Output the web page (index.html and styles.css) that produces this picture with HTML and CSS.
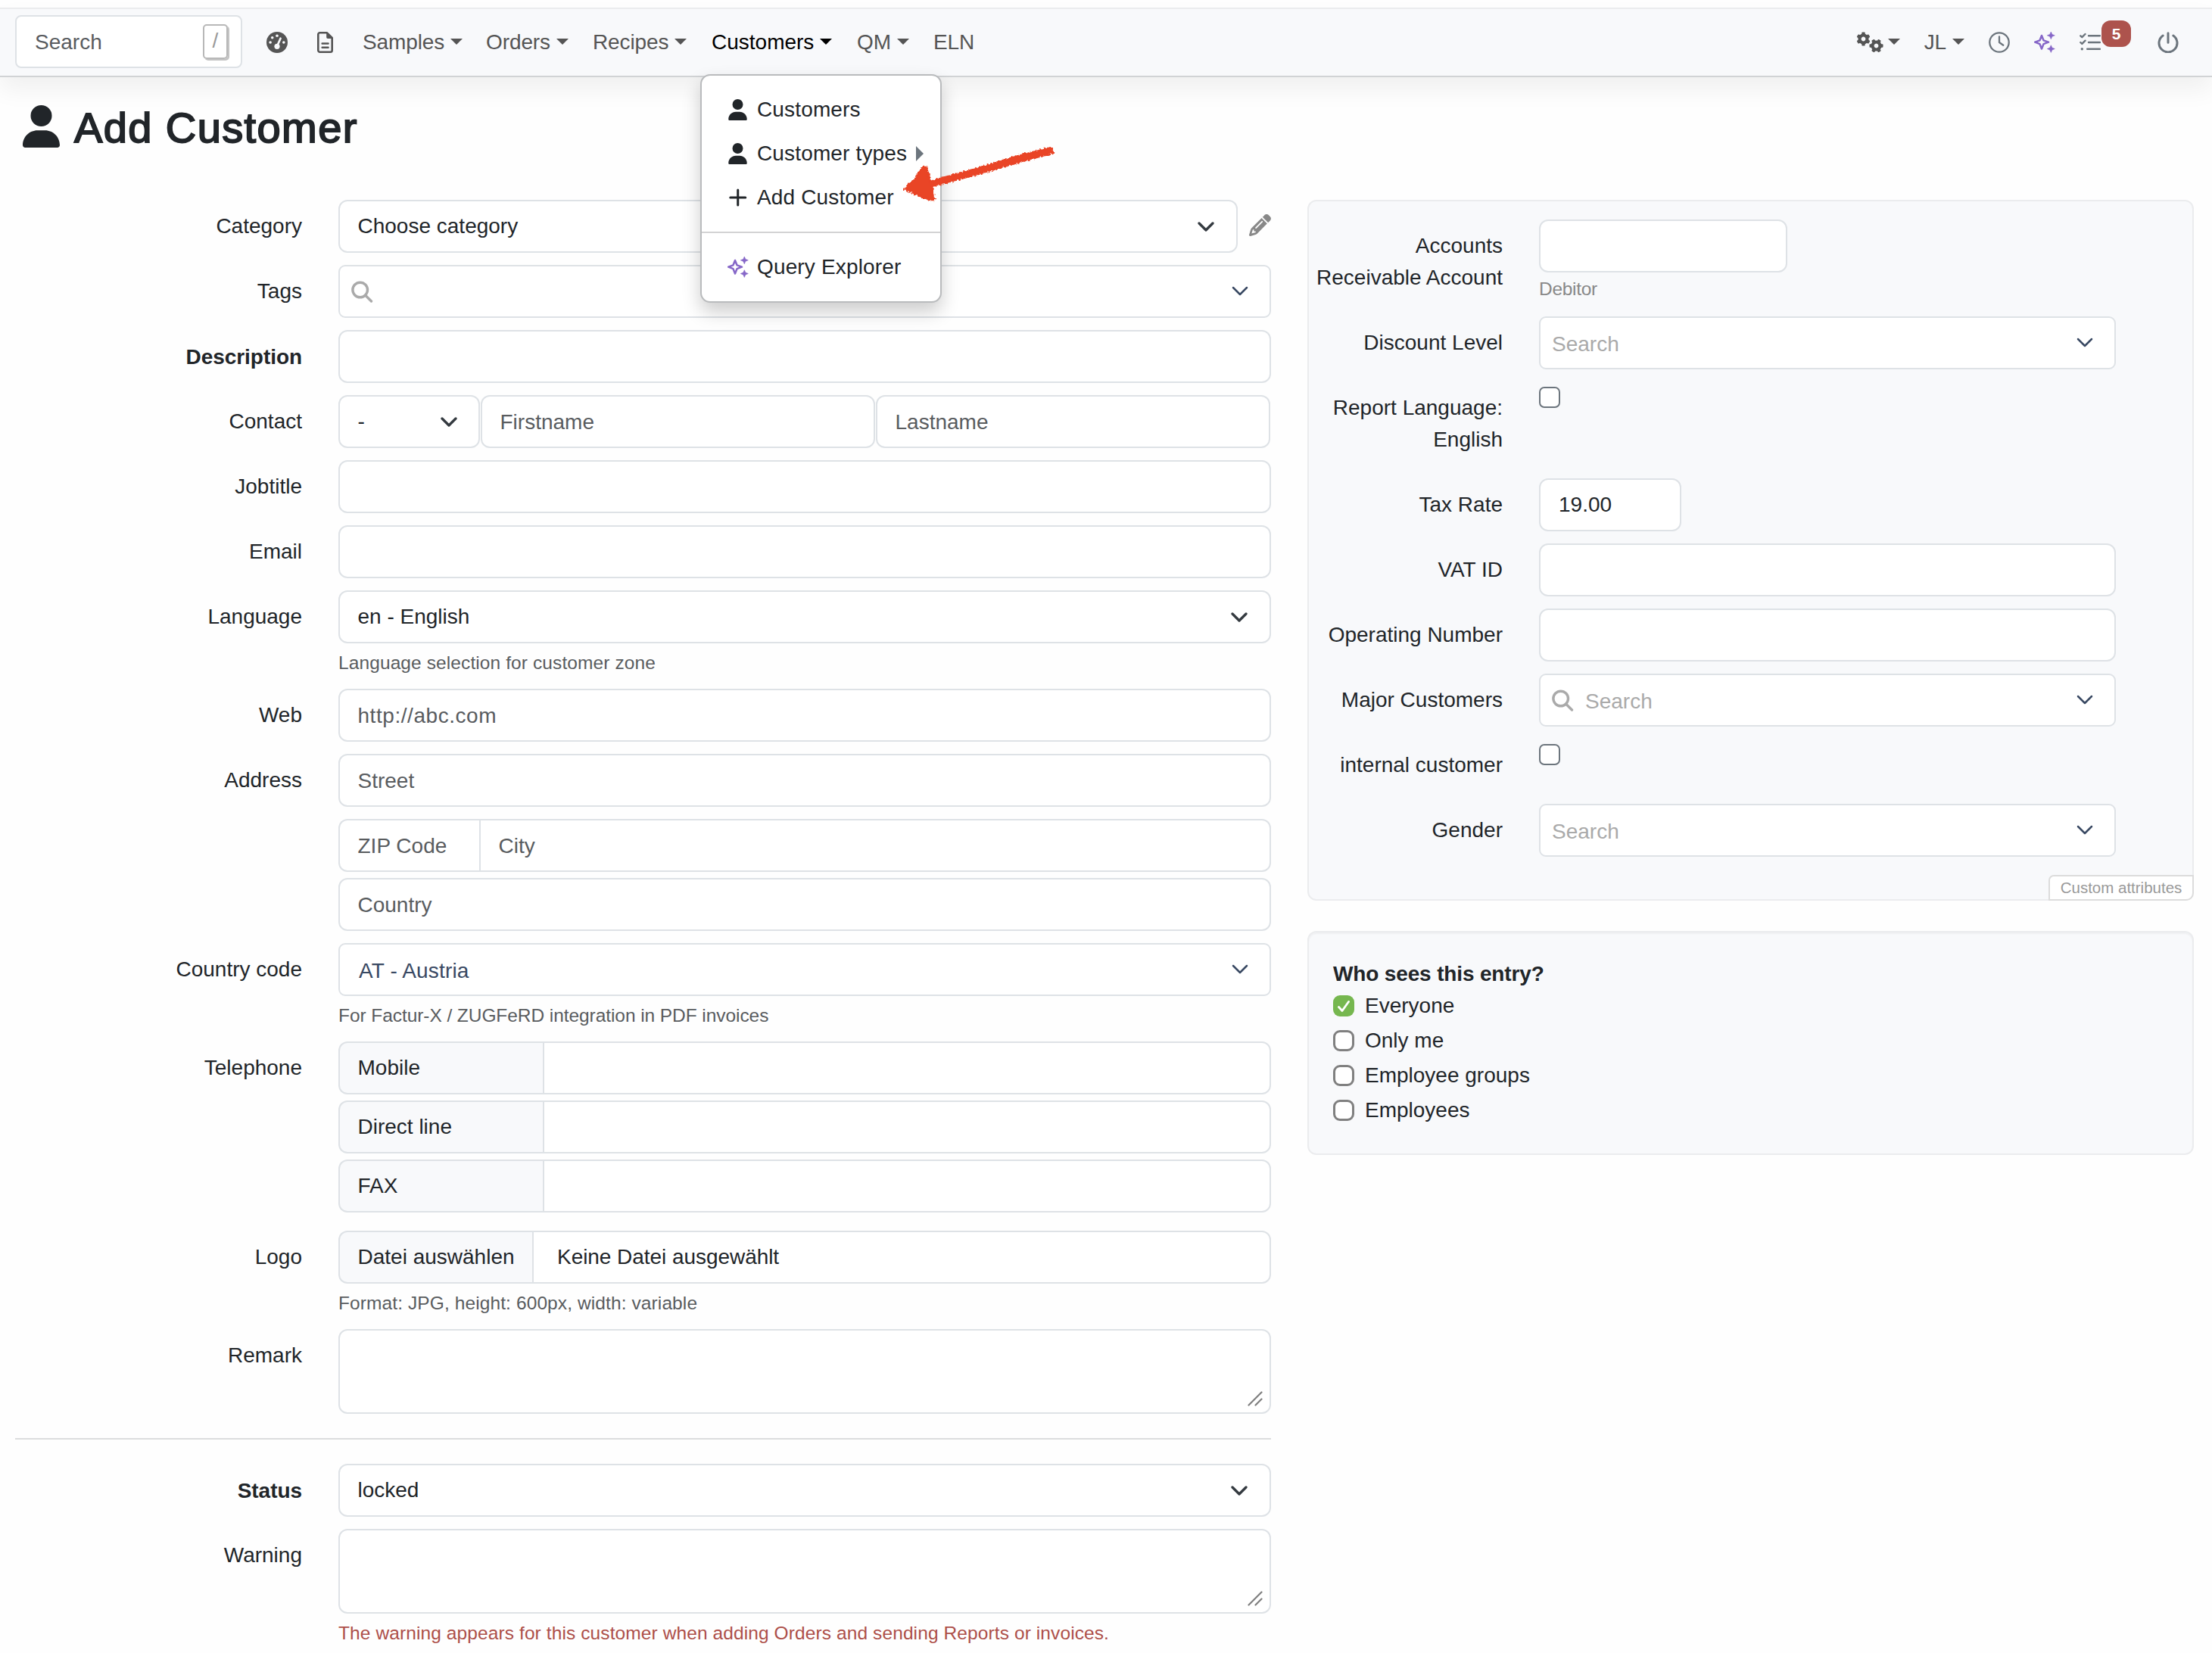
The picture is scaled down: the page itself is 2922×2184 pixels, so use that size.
FILE: index.html
```html
<!DOCTYPE html>
<html lang="en">
<head>
<meta charset="utf-8">
<title>Add Customer</title>
<link rel="stylesheet" href="styles.css">
</head>
<body>
<svg class="sprite" aria-hidden="true">
  <filter id="rough" x="-5%" y="-10%" width="110%" height="120%"><feTurbulence type="fractalNoise" baseFrequency=".35" numOctaves="2" seed="4"/><feDisplacementMap in="SourceGraphic" scale="5" xChannelSelector="R" yChannelSelector="G"/></filter>
  <symbol id="user" viewBox="0 0 448 512"><path fill="currentColor" d="M224 256a128 128 0 1 0 0-256 128 128 0 1 0 0 256zm-45.7 48C79.800 304 0 383.800 0 482.300 0 498.700 13.300 512 29.700 512h388.600c16.400 0 29.700-13.300 29.700-29.700C448 383.800 368.200 304 269.700 304h-91.400z"/></symbol>
  <symbol id="sparkles" viewBox="0 0 28 28"><path fill="none" stroke="currentColor" stroke-width="2.500" stroke-linejoin="round" d="M10 5l2.500 6.300 6.500 2.400-6.500 2.500L10 22.500l-2.500-6.300L1.200 13.700l6.300-2.400z"/><path fill="currentColor" stroke="currentColor" stroke-width=".6" stroke-linejoin="round" d="M22.300 0l1.500 3.400 3.500 1.400-3.500 1.500-1.500 3.400-1.500-3.400-3.500-1.500 3.500-1.400zM22.300 17.700l1.500 3.400 3.500 1.400-3.500 1.500-1.500 3.400-1.500-3.400-3.500-1.500 3.500-1.400z"/></symbol>
  <symbol id="chevron" viewBox="0 0 22 13"><path fill="none" stroke="currentColor" stroke-width="3.300" stroke-linecap="round" stroke-linejoin="round" d="M2 2l9 9 9-9"/></symbol>
  <symbol id="chevron-thin" viewBox="0 0 22 13"><path fill="none" stroke="currentColor" stroke-width="2.500" stroke-linecap="round" stroke-linejoin="round" d="M2 2l9 9 9-9"/></symbol>
  <symbol id="magnifier" viewBox="0 0 29 29"><path fill="none" stroke="currentColor" stroke-width="3.400" stroke-linecap="round" d="M18.500 19l8 8"/><circle cx="11.700" cy="12" r="9.800" fill="none" stroke="currentColor" stroke-width="3.400"/></symbol>
  <symbol id="grip" viewBox="0 0 20 20"><path stroke="currentColor" stroke-width="2.200" stroke-linecap="round" d="M1.500 18.500l17-17M10.500 18.500l8-8"/></symbol>
  <symbol id="gear" viewBox="-9.500 -9.500 19 19"><circle r="5" fill="none" stroke="currentColor" stroke-width="4.200"/><g fill="currentColor"><rect x="-2.200" y="-9" width="4.400" height="4" rx="1"/><rect x="-2.200" y="-9" width="4.400" height="4" rx="1" transform="rotate(60)"/><rect x="-2.200" y="-9" width="4.400" height="4" rx="1" transform="rotate(120)"/><rect x="-2.200" y="-9" width="4.400" height="4" rx="1" transform="rotate(180)"/><rect x="-2.200" y="-9" width="4.400" height="4" rx="1" transform="rotate(240)"/><rect x="-2.200" y="-9" width="4.400" height="4" rx="1" transform="rotate(300)"/></g></symbol>
</svg>

<nav class="navbar">
  <div class="quick-search"><span>Search</span><kbd>/</kbd></div>
  <div class="nav-main">
    <svg class="icon" viewBox="0 0 28 28" width="28" height="28"><circle cx="14" cy="14" r="14" fill="currentColor"/><g fill="#f8f9fb"><circle cx="5.100" cy="14" r="1.800"/><circle cx="7.700" cy="7.800" r="1.800"/><circle cx="14" cy="5.200" r="1.800"/><circle cx="22.800" cy="14" r="1.800"/><circle cx="14" cy="19.300" r="3.600"/></g><path stroke="#f8f9fb" stroke-width="2.600" stroke-linecap="round" d="M18.600 8.600l-4 9"/></svg>
    <svg class="icon" viewBox="0 0 21 28" width="21" height="28"><path fill="none" stroke="currentColor" stroke-width="2.600" stroke-linejoin="round" d="M3.500 1.300h9.500l6.700 6.700v16.500a2.200 2.200 0 0 1-2.200 2.200h-14a2.200 2.200 0 0 1-2.200-2.200v-21a2.200 2.200 0 0 1 2.200-2.200z"/><path fill="currentColor" d="M12.200 1v6.300a1.700 1.700 0 0 0 1.700 1.700H20z"/><path stroke="currentColor" stroke-width="2.400" stroke-linecap="round" d="M6.600 15.500h8M6.600 20.700h8"/></svg>
    <a class="nav-link">Samples<i class="caret"></i></a>
    <a class="nav-link">Orders<i class="caret"></i></a>
    <a class="nav-link">Recipes<i class="caret"></i></a>
    <div class="nav-drop">
      <a class="nav-link active">Customers<i class="caret"></i></a>
      <div class="dropdown">
        <a class="item"><svg class="ic"><use href="#user"/></svg>Customers</a>
        <a class="item"><svg class="ic"><use href="#user"/></svg>Customer types<i class="caret-right"></i></a>
        <a class="item"><svg class="ic" viewBox="0 0 24.500 28"><path stroke="currentColor" stroke-width="3" stroke-linecap="round" d="M2.500 14h20M12.500 4v20"/></svg>Add Customer</a>
        <div class="divider"></div>
        <a class="item"><svg class="ic ic-wide"><use href="#sparkles"/></svg>Query Explorer</a>
        <svg class="pointer" viewBox="0 0 204 84" width="204" height="84"><path filter="url(#rough)" fill="#e94427" stroke="#e94427" stroke-width="2.500" stroke-linejoin="round" d="M5 63l11-11 8-11 6-8 3 0 3 9 3 11 20-6 44-12 45-14 50-13 3 7-48 13-48 14-44 12-20 5 2 10 1 8-5 0-16-6z"/></svg>
      </div>
    </div>
    <a class="nav-link">QM<i class="caret"></i></a>
    <a class="nav-link">ELN</a>
  </div>
  <div class="nav-side">
    <a class="nav-link"><span class="gears"><svg width="19" height="19"><use href="#gear"/></svg><svg class="gear-b" width="19" height="19"><use href="#gear"/></svg></span><i class="caret"></i></a>
    <a class="nav-link">JL<i class="caret"></i></a>
    <svg class="muted" viewBox="0 0 28 28" width="28" height="28"><g fill="none" stroke="currentColor" stroke-width="2.300" stroke-linecap="round" stroke-linejoin="round"><circle cx="14" cy="14" r="12.700"/><path d="M14 6.500v7.500l5.300 3.700"/></g></svg>
    <svg class="violet" width="28" height="28"><use href="#sparkles"/></svg>
    <svg class="muted" viewBox="0 0 28 28" width="28" height="28"><g fill="none" stroke="currentColor" stroke-width="2.400" stroke-linecap="round" stroke-linejoin="round"><path d="M12 5.300h15M12 14h15M10.200 22.700h16.800M1.300 5.300l2 1.900 4.200-4.200M1.300 14l2 1.900 4.200-4.200"/></g><circle cx="3.300" cy="22.700" r="1.700" fill="currentColor"/></svg>
    <span class="count">5</span>
    <svg class="muted" viewBox="0 0 28 28" width="28" height="28"><g fill="none" stroke="currentColor" stroke-width="3" stroke-linecap="round"><path d="M14 1.800v12.500M7.200 5a12 12 0 1 0 13.600 0"/></g></svg>
  </div>
</nav>

<main>
  <h1><svg width="49" height="56"><use href="#user"/></svg>Add Customer</h1>
  <div class="columns">
    <form class="form">
      <div class="row"><label>Category</label><div class="field inline"><div class="control">Choose category<svg class="chev"><use href="#chevron"/></svg></div><svg class="pencil" viewBox="0 0 512 512"><path fill="currentColor" d="M410.300 231l11.300-11.300-33.900-33.900-62.100-62.100L291.700 89.800l-11.300 11.300-22.600 22.600L58.600 322.900c-10.400 10.400-18 23.300-22.200 37.400L1 480.700c-2.500 8.400-.2 17.500 6.100 23.700s15.300 8.500 23.700 6.100l120.300-35.400c14.100-4.200 27-11.800 37.400-22.200L387.700 253.700 410.300 231zM160 399.400l-9.100 22.700c-4 3.100-8.500 5.400-13.300 6.900L59.400 452l23-78.100c1.400-4.900 3.800-9.400 6.900-13.300l22.700-9.100v32c0 8.800 7.200 16 16 16h32zM362.700 18.700L348.300 33.200 325.700 55.800 314.300 67.100l33.900 33.900 62.100 62.100 33.900 33.900 11.300-11.300 22.600-22.600 14.500-14.500c25-25 25-65.500 0-90.500L453.300 18.700c-25-25-65.500-25-90.500 0zm-47.400 168l-144 144c-6.200 6.200-16.400 6.200-22.600 0s-6.200-16.400 0-22.600l144-144c6.200-6.200 16.400-6.200 22.600 0s6.200 16.400 0 22.600z"/></svg></div></div>
      <div class="row"><label>Tags</label><div class="field"><div class="control picker"><svg class="lens"><use href="#magnifier"/></svg><svg class="chev"><use href="#chevron-thin"/></svg></div></div></div>
      <div class="row"><label class="required">Description</label><div class="field"><div class="control"></div></div></div>
      <div class="row"><label>Contact</label><div class="field contact"><div class="control title">-<svg class="chev"><use href="#chevron"/></svg></div><div class="control hint">Firstname</div><div class="control hint">Lastname</div></div></div>
      <div class="row"><label>Jobtitle</label><div class="field"><div class="control"></div></div></div>
      <div class="row"><label>Email</label><div class="field"><div class="control"></div></div></div>
      <div class="row"><label>Language</label><div class="field"><div class="control">en - English<svg class="chev"><use href="#chevron"/></svg></div><p class="help">Language selection for customer zone</p></div></div>
      <div class="row"><label>Web</label><div class="field"><div class="control hint url">http://abc.com</div></div></div>
      <div class="row"><label>Address</label><div class="field stack"><div class="control hint street">Street</div><div class="group"><div class="control hint zip">ZIP Code</div><div class="control hint">City</div></div><div class="control hint">Country</div></div></div>
      <div class="row"><label>Country code</label><div class="field"><div class="control picker value">AT - Austria<svg class="chev"><use href="#chevron-thin"/></svg></div><p class="help snug">For Factur-X / ZUGFeRD integration in PDF invoices</p></div></div>
      <div class="row phones"><label>Telephone</label><div class="field stack"><div class="group"><div class="control addon">Mobile</div><div class="control"></div></div><div class="group"><div class="control addon">Direct line</div><div class="control"></div></div><div class="group"><div class="control addon">FAX</div><div class="control"></div></div></div></div>
      <div class="row"><label>Logo</label><div class="field"><div class="group"><div class="control addon file">Datei auswählen</div><div class="control filename">Keine Datei ausgewählt</div></div><p class="help">Format: JPG, height: 600px, width: variable</p></div></div>
      <div class="row"><label>Remark</label><div class="field"><div class="control area"><svg class="grip"><use href="#grip"/></svg></div></div></div>
      <hr>
      <div class="row"><label class="required">Status</label><div class="field"><div class="control">locked<svg class="chev"><use href="#chevron"/></svg></div></div></div>
      <div class="row"><label>Warning</label><div class="field"><div class="control area"><svg class="grip"><use href="#grip"/></svg></div><p class="help danger">The warning appears for this customer when adding Orders and sending Reports or invoices.</p></div></div>
    </form>

    <aside>
      <section class="card attributes">
        <div class="row tall"><label>Accounts Receivable Account</label><div class="field"><div class="control account"></div><p class="help light">Debitor</p></div></div>
        <div class="row"><label>Discount Level</label><div class="field"><div class="control picker ghost">Search<svg class="chev"><use href="#chevron-thin"/></svg></div></div></div>
        <div class="row tall"><label>Report Language: English</label><div class="field"><span class="box"></span></div></div>
        <div class="row"><label>Tax Rate</label><div class="field"><div class="control rate">19.00</div></div></div>
        <div class="row"><label>VAT ID</label><div class="field"><div class="control"></div></div></div>
        <div class="row"><label>Operating Number</label><div class="field"><div class="control"></div></div></div>
        <div class="row"><label>Major Customers</label><div class="field"><div class="control picker ghost"><svg class="lens"><use href="#magnifier"/></svg>Search<svg class="chev"><use href="#chevron-thin"/></svg></div></div></div>
        <div class="row"><label>internal customer</label><div class="field"><span class="box"></span></div></div>
        <div class="row"><label>Gender</label><div class="field"><div class="control picker ghost">Search<svg class="chev"><use href="#chevron-thin"/></svg></div></div></div>
        <span class="tag">Custom attributes</span>
      </section>
      <section class="card visibility">
        <h2>Who sees this entry?</h2>
        <div class="option"><span class="check on"><svg viewBox="0 0 28 28" width="28" height="28"><path fill="none" stroke="#fff" stroke-width="2.800" stroke-linecap="round" stroke-linejoin="round" d="M7.500 15.500l4.500 5L20.500 8.500"/></svg></span>Everyone</div>
        <div class="option"><span class="check"></span>Only me</div>
        <div class="option"><span class="check"></span>Employee groups</div>
        <div class="option"><span class="check"></span>Employees</div>
      </section>
    </aside>
  </div>
</main>
</body>
</html>
```
FILE: styles.css
```css
* { box-sizing: border-box; }

body {
  margin: 0;
  padding-top: 10px;
  height: 2184px;
  overflow: hidden;
  background: #fefefe;
  color: #212529;
  font: 28px/42px "Liberation Sans", Arial, sans-serif;
}

svg { display: block; flex: none; }
.sprite { position: absolute; width: 0; height: 0; }
p, h1, h2 { margin: 0; }

/* Navigation */
.navbar {
  position: relative;
  z-index: 2;
  display: flex;
  align-items: center;
  height: 92px;
  padding: 0 44px 0 20px;
  background: #f8f9fb;
  border-top: 2px solid #ebecee;
  border-bottom: 2px solid #d1d3d5;
  box-shadow: 0 16px 32px rgba(0, 0, 0, .06);
}

.quick-search {
  display: flex;
  justify-content: space-between;
  align-items: center;
  width: 300px;
  height: 70px;
  padding: 0 17px 0 24px;
  margin-top: -2px;
  background: #fff;
  border: 2px solid #dee2e6;
  border-radius: 8px;
  color: #595c5f;
}

.quick-search span { padding-top: 1px; }

kbd {
  width: 33px;
  height: 46px;
  border: 2px solid #b8b8b8;
  border-radius: 5px;
  box-shadow: 2px 2px 0 #c4c4c4;
  font: 28px/40px "Liberation Sans", Arial, sans-serif;
  text-align: center;
  color: #999;
}

.nav-main {
  display: grid;
  grid-template-columns: 67px 60px 163px 141px 157px 192px 101px auto;
  align-items: center;
  margin-left: 32px;
  color: #555;
}

.nav-link { display: flex; align-items: center; gap: 8px; color: #555; letter-spacing: -.1px; }
.nav-link.active { color: #000; letter-spacing: 0; }

.caret {
  border: 8px solid transparent;
  border-top-color: currentColor;
  border-bottom: 0;
  margin-top: -2px;
}

.nav-drop { position: relative; }

.dropdown {
  position: absolute;
  left: -15px;
  top: 63px;
  width: 319px;
  padding: 16px 0;
  background: #fff;
  background-clip: padding-box;
  border: 2px solid #b9bbbd;
  border-radius: 13px;
  box-shadow: 0 12px 24px rgba(0, 0, 0, .2);
  color: #212529;
  letter-spacing: .15px;
}

.item {
  display: flex;
  align-items: center;
  height: 58px;
  padding-left: 35px;
  white-space: nowrap;
}
.ic { width: 25px; height: 28px; margin-right: 13px; }
.ic-wide { width: 28px; margin: 0 11px 0 -1px; color: #8667c8; }

.caret-right {
  margin-left: 12px;
  border: 10px solid transparent;
  border-left-color: #6c757d;
  border-right: 0;
}

.divider { height: 2px; margin: 16px 0; background: #d3d3d4; }
.pointer { position: absolute; left: 263px; top: 87px; }

.nav-side { display: flex; align-items: center; margin-left: auto; color: #555; }
.gears { display: flex; width: 34px; height: 28px; }
.gear-b { align-self: flex-end; margin-left: -2px; transform: rotate(30deg); }
.nav-side .nav-link { margin-right: 32px; }
.muted { color: #6c757d; }
.violet { color: #8667c8; margin: 0 32px; }

.count {
  width: 39px;
  height: 35px;
  margin: -23px 35px 0 1px;
  border-radius: 12px;
  background: #ad534d;
  color: #fff;
  font-size: 21px;
  font-weight: bold;
  line-height: 36px;
  text-align: center;
}

/* Page layout */
main { padding: 33px 24px 0 20px; }

h1 {
  display: flex;
  gap: 19px;
  height: 67px;
  margin-bottom: 62px;
  padding-left: 10px;
  font-size: 56px;
  font-weight: normal;
  line-height: 67px;
  letter-spacing: 1.4px;
  -webkit-text-stroke: 1.9px #212529;
}
h1 svg { margin-top: 4px; }

.columns {
  display: grid;
  grid-template-columns: 1659px 1fr;
  gap: 48px;
  align-items: start;
}

.row {
  display: grid;
  grid-template-columns: 427px 1fr;
  margin-bottom: 16px;
  min-height: 70px;
}
label { padding: 14px 48px 0 0; text-align: right; }
.required { font-weight: bold; padding-top: 15px; letter-spacing: -.05px; }

.control {
  position: relative;
  height: 70px;
  padding: 12px 24px;
  background: #fff;
  border: 2px solid #dee2e6;
  border-radius: 12px;
  white-space: nowrap;
}
.hint { padding-top: 13px; color: #595c5f; }
.url { letter-spacing: .55px; }
.form .control { padding-left: 23.5px; }
.inline { display: flex; align-items: center; gap: 15px; }
.inline .control { flex: 1; }
.pencil { width: 29px; height: 29px; margin-top: -4px; color: #888; }

.chev {
  position: absolute;
  right: 29px;
  top: 27px;
  width: 22px;
  height: 13px;
  color: #343a40;
}
.title .chev { right: 28px; }
.picker { border-radius: 9px; padding-top: 14px; }
.picker .chev { right: 28px; top: 26px; color: #394963; }
.picker .lens { position: absolute; left: 15px; top: 19px; width: 29px; height: 29px; color: #aaa; }
.form .value { color: #394963; padding-left: 25px; letter-spacing: .15px; }
.ghost { color: #aaa; padding-left: 15px; }
.ghost:has(.lens) { padding-left: 59px; }

.contact { display: grid; grid-template-columns: 187px 521px 521px; column-gap: 1px; }

.stack { display: grid; row-gap: 8px; }
.street { margin-bottom: 8px; }
.group { display: flex; }
.group .control:first-child { border-radius: 12px 0 0 12px; border-right: 0; }
.group .control:last-child { flex: 1; border-radius: 0 12px 12px 0; }
.zip { width: 186px; }
.group .addon { width: 270px; background: #f8f9fb; }
.group .file { width: 256px; }
.form .filename { padding-left: 31px; letter-spacing: -.05px; }
.phones { margin-bottom: 24px; }

.help {
  height: 36px;
  margin-top: 8px;
  font-size: 24.5px;
  line-height: 36px;
  letter-spacing: .1px;
  white-space: nowrap;
  color: #595c5f;
}
.snug { letter-spacing: -.07px; }
.light { color: #888; margin: 4px 0 2px; letter-spacing: -.3px; }
.danger { color: #ad4f49; }

.area { height: 112px; }
.grip { position: absolute; right: 9px; bottom: 8px; width: 20px; height: 20px; color: #7f7f7f; }

hr { height: 2px; margin: 32px 0; border: 0; background: #dcddde; }

/* Side cards */
.card {
  position: relative;
  background: #f8f9fb;
  border: 2px solid #ebecee;
  border-radius: 12px;
}
.attributes { height: 926px; padding: 24px 101px 0 0; margin-bottom: 40px; }
.attributes .row { grid-template-columns: 304px 1fr; }
.attributes .tall { min-height: 112px; }
.account { width: 328px; }
.rate { width: 188px; }

.box {
  display: block;
  width: 28px;
  height: 28px;
  margin-top: 7px;
  background: #fff;
  border: 2px solid #6c757d;
  border-radius: 7px;
}

.tag {
  position: absolute;
  right: -2px;
  bottom: -2px;
  height: 34px;
  width: 192px;
  border: 2px solid #dcdcdc;
  border-radius: 7px 0 10px 0;
  background: #fff;
  color: #999;
  font-size: 20.500px;
  line-height: 30px;
  text-align: center;
}

.visibility {
  height: 296px;
  padding: 34px 32px;
  box-shadow: inset 0 2px 2px rgba(0, 0, 0, .04);
}
h2 { font-size: 28px; line-height: 42px; letter-spacing: -.15px; }
.option { display: flex; align-items: center; gap: 14px; height: 42px; margin-bottom: 4px; }
.check {
  width: 28px;
  height: 28px;
  background: #fff;
  border: 3px solid #808080;
  border-radius: 9px;
}
.check.on { border: 0; background: #76b74f; }
```
